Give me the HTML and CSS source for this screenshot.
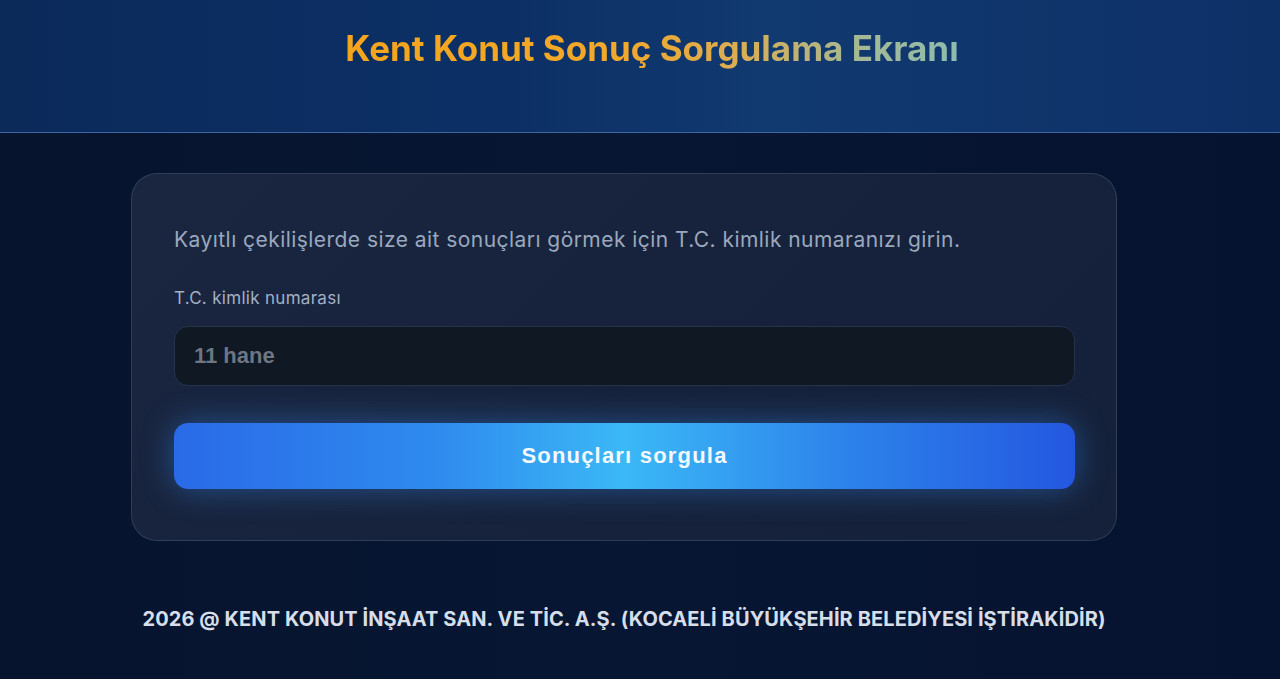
FILE: index.html
```html
<!DOCTYPE html>
<html lang="tr">
  <head>
    <meta charset="UTF-8" />
    <meta name="viewport" content="width=device-width, initial-scale=1.0" />
    <title>Kent Konut Sonuç Sorgulama</title>
    <link rel="stylesheet" href="styles.css">
  </head>
  <body>
    <header class="top">
      <h1 class="title">Kent Konut Sonuç Sorgulama Ekranı</h1>
    </header>

    <main class="main">
      <form class="card">
        <p class="intro">Kayıtlı çekilişlerde size ait sonuçları görmek için T.C. kimlik numaranızı girin.</p>
        <label class="label" for="tc">T.C. kimlik numarası</label>
        <input class="field" id="tc" type="text" placeholder="11 hane" />
        <button class="submit" type="button">Sonuçları sorgula</button>
      </form>
    </main>

    <footer class="foot">
      2026 @ KENT KONUT İNŞAAT SAN. VE TİC. A.Ş. (KOCAELİ BÜYÜKŞEHİR BELEDİYESİ İŞTİRAKİDİR)
    </footer>
  </body>
</html>
```

FILE: styles.css
```css
html,
body {
  margin: 0;
  height: 100%;
}
body {
  font-family: Inter, "Noto Sans", sans-serif;
  background: linear-gradient(90deg, #06142e 0%, #071633 50%, #051330 100%);
  color: #e2e8f0;
  overflow: hidden;
}
.top {
  height: 133px;
  border-bottom: 1px solid #3d66a3;
  background: linear-gradient(90deg, #0b2a5a 0%, #0c3066 40%, #113a70 60%, #0d3067 100%);
  box-sizing: border-box;
  padding: 27px 0 0 24px;
  text-align: center;
}
.title {
  display: inline-block;
  margin: 0;
  font-size: 35px;
  line-height: 42px;
  font-weight: 700;
  letter-spacing: 0;
  background: linear-gradient(90deg, #f5a51c 0%, #f2a82a 45%, #d9ae55 65%, #a8b890 82%, #8dbcb0 100%);
  -webkit-background-clip: text;
  background-clip: text;
  color: transparent;
}
.main {
  display: flex;
  justify-content: center;
  padding: 40px 32px 0 0;
}
.card {
  width: 986px;
  box-sizing: border-box;
  padding: 53px 41px 51px 42px;
  border: 1px solid rgba(148, 163, 184, 0.2);
  border-radius: 26px;
  background: linear-gradient(135deg, #1a2640 0%, #16223b 60%, #15213a 100%);
  display: flex;
  flex-direction: column;
}
.intro {
  margin: 0 0 35px;
  font-size: 21px;
  line-height: 26px;
  color: #9aa8bd;
  letter-spacing: 0.45px;
}
.label {
  font-size: 17px;
  line-height: 20px;
  color: #a3b0c3;
  margin-bottom: 18px;
  letter-spacing: 0.3px;
}
.field {
  height: 60px;
  box-sizing: border-box;
  border: 1px solid #263247;
  border-radius: 14px;
  background: #0f1823;
  padding: 0 19px;
  font-family: "Liberation Sans", Arial, sans-serif;
  font-size: 22px;
  font-weight: 700;
  color: #e2e8f0;
  margin-bottom: 37px;
  outline: none;
}
.field::placeholder {
  color: #6e7683;
}
.submit {
  height: 66px;
  border: none;
  border-radius: 14px;
  background: linear-gradient(90deg, #2a6ae8 0%, #2f8cee 30%, #3bb8f6 50%, #2d82ea 75%, #2457e0 100%);
  box-shadow: 0 0 32px rgba(56, 140, 240, 0.45);
  font-family: "Liberation Sans", Arial, sans-serif;
  font-size: 22px;
  font-weight: 700;
  color: #f4f8ff;
  letter-spacing: 1.2px;
  cursor: pointer;
}
.foot {
  margin-top: 66px;
  padding-right: 32px;
  text-align: center;
  font-size: 20px;
  line-height: 24px;
  font-weight: 700;
  color: #d6deea;
  letter-spacing: 0.1px;
}
```
